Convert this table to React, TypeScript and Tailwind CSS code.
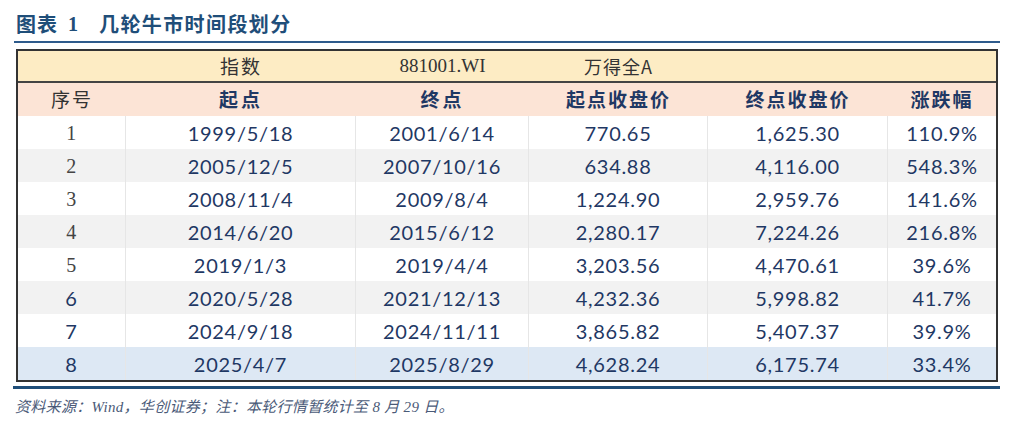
import React from 'react';

const cols = 'grid grid-cols-[108px_230px_173px_179px_180px_108px]';

const rows = [
  ['1', '1999/5/18', '2001/6/14', '770.65', '1,625.30', '110.9%'],
  ['2', '2005/12/5', '2007/10/16', '634.88', '4,116.00', '548.3%'],
  ['3', '2008/11/4', '2009/8/4', '1,224.90', '2,959.76', '141.6%'],
  ['4', '2014/6/20', '2015/6/12', '2,280.17', '7,224.26', '216.8%'],
  ['5', '2019/1/3', '2019/4/4', '3,203.56', '4,470.61', '39.6%'],
  ['6', '2020/5/28', '2021/12/13', '4,232.36', '5,998.82', '41.7%'],
  ['7', '2024/9/18', '2024/11/11', '3,865.82', '5,407.37', '39.9%'],
  ['8', '2025/4/7', '2025/8/29', '4,628.24', '6,175.74', '33.4%'],
];

const rowBg = (i: number) => (i === 7 ? 'bg-[#dde8f4]' : i % 2 === 1 ? 'bg-[#f2f2f2]' : 'bg-white');

const serif = "font-['Liberation_Serif','Noto_Sans_CJK_SC',serif]";
const cjk = "font-['Noto_Sans_CJK_SC',sans-serif]";
const num = "font-['Lato','Noto_Sans_CJK_SC',sans-serif]";

const App = () => {
  return (
    <div className="w-[1024px] h-[434px] bg-white">
      {/* title */}
      <div className={`flex items-center h-[41px] pl-[16px] pt-[6px] text-[20px] font-bold text-[#1f4e79] ${cjk}`}>
        <span className="tracking-[1px]">图表</span>
        <span className={`ml-[10px] ${serif}`}>1</span>
        <span className="ml-[21px] tracking-[1.4px]">几轮牛市时间段划分</span>
      </div>
      <div className="ml-[14px] w-[986px] h-[2px] bg-[#2e5b8c]" />

      {/* table */}
      <div className="mt-[6px] ml-[16px] w-[982px] border-2 border-[#333]">
        <div className={`${cols} h-[32px] bg-[#fdecc4] border-b-2 border-[#444] text-[19px] text-[#333] items-center text-center`}>
          <span />
          <span className={`${cjk} tracking-[2px]`}>指数</span>
          <span className={serif}>881001.WI</span>
          <span className={`${cjk} text-[18px] tracking-[1px]`}>万得全A</span>
          <span />
          <span />
        </div>
        <div className={`${cols} h-[33px] bg-[#fce4d6] text-[19px] items-center text-center ${cjk}`}>
          <span className="text-[#333] tracking-[2px]">序号</span>
          <span className="font-bold text-[#1f3864] tracking-[3px]">起点</span>
          <span className="font-bold text-[#1f3864] tracking-[3px]">终点</span>
          <span className="font-bold text-[#1f3864] tracking-[2px]">起点收盘价</span>
          <span className="font-bold text-[#1f3864] tracking-[2px]">终点收盘价</span>
          <span className="font-bold text-[#1f3864] tracking-[2px]">涨跌幅</span>
        </div>
        {rows.map((r, i) => (
          <div key={r[0]} className={`${cols} h-[33px] ${rowBg(i)} text-[20px] tracking-[0.7px] text-[#1f3864] items-stretch text-center ${num}`}>
            {r.map((c, j) => (
              <span
                key={j}
                className={`flex items-center justify-center ${j < 5 ? 'border-r border-[#e6e6e6]' : ''} ${
                  j === 0 && i < 5 ? `${serif} text-[#444] text-[20px]` : ''
                }`}
              >
                {c}
              </span>
            ))}
          </div>
        ))}
      </div>
      <div className="mt-[4px] ml-[13px] w-[987px] h-[3px] bg-[#1f4e79]" />

      {/* footnote */}
      <div className={`mt-[7px] pl-[15px] text-[15px] tracking-[0.3px] italic text-[#4a5a78] ${serif}`}>
        资料来源：Wind，华创证券；注：本轮行情暂统计至 8 月 29 日。
      </div>
    </div>
  );
};

export default App;
